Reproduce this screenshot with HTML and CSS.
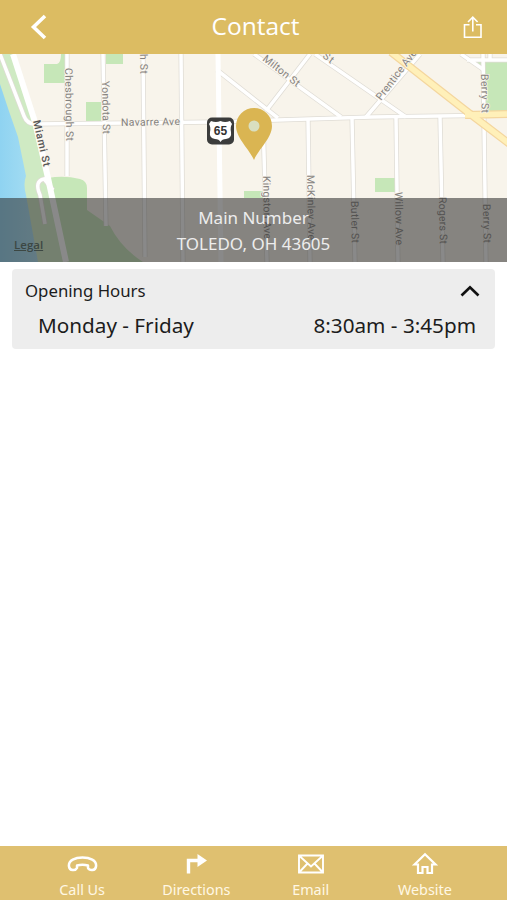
FILE: index.html
```html
<!DOCTYPE html>
<html lang="en">
<head>
    <meta charset="UTF-8">
    <meta name="viewport" content="width=device-width, initial-scale=1.0">
    <title>Contact</title>
    <link rel="stylesheet" href="styles.css">
</head>
<body>
    <header class="top-bar">
        <button class="icon-button" aria-label="Back">
            <svg width="18" height="28" viewBox="0 0 18 28"><path d="M15 3L3.500 14 15 25" fill="none" stroke="#fff" stroke-width="3.600"/></svg>
        </button>
        <h1>Contact</h1>
        <button class="icon-button" aria-label="Share">
            <svg width="20" height="24" viewBox="0 0 20 24"><path d="M6.500 9.800H1.500v12.500h16.500V9.800h-5M9.800 16.500V2.500M5 7L9.800 2.200l4.800 4.800" fill="none" stroke="#fff" stroke-width="1.600"/></svg>
        </button>
    </header>

    <section class="map">
        <svg class="map-canvas" width="507" height="208" viewBox="0 54 507 208">
            <defs>
                <linearGradient id="river" x1="0" x2="1">
                    <stop offset="0" stop-color="#8fd3f1"/>
                    <stop offset="1" stop-color="#a9dff3"/>
                </linearGradient>
            </defs>
            <rect y="54" width="507" height="208" fill="#f8f4eb"/>

            <!-- Parks and river -->
            <path d="M0 54H13L35 122L48 178L66 262H0Z" fill="#cfeac3"/>
            <path d="M48 178Q64 175 80 179Q87 181 87 188V210L110 226Q121 248 143 262H66Z" fill="#c6e7b8"/>
            <path d="M0 84Q9 112 18 137L26 176Q23 184 26 195L38 262H0Z" fill="url(#river)"/>
            <path d="M44 64H57Q61 63 61 54H67V83H44ZM106 54H123V64H106ZM86 102H101V121H86ZM375 178H395V192H375ZM244 191H265V198H244ZM485 62H507V111H485ZM472 62H484V70Z" fill="#c6e7b8"/>

            <!-- Streets, drawn as a grey casing with white on top -->
            <g fill="none" stroke="#dfdcd5" stroke-width="5">
                <use href="#streets"/>
            </g>
            <g fill="none" stroke="#fff" stroke-width="3.500">
                <g id="streets">
                    <path d="M0 54L24 116Q27 124 35 124L215 122L372 117L507 115"/>
                    <path d="M67 54V176M103 54L106 226M143 54L145 257M181 54L183 262"/>
                    <path d="M263 118L267 262M308 118L310 262M352 118L355 262M396 118L398 262M440 117L443 262M483 54L486 262"/>
                    <path d="M217 70L278 118M254 54L341 117M315 54L406 117M310 54L266 111M420 54L366 117M461 54L484 70M467 60H507M490 54V60"/>
                    <path d="M53 190L44 179Q34 181 40 195L45 224"/>
                </g>
                <path d="M13 54L35 122L48 178L66 262" stroke-width="6"/>
                <path d="M218 54L221 262" stroke-width="5"/>
            </g>
            <g fill="none" stroke="#f4d69e" stroke-width="8">
                <path d="M391 52L465 110L520 152M465 115L507 114"/>
                <path d="M391 52L465 110L520 152M465 115L507 114" stroke="#fff0b9" stroke-width="5.500"/>
            </g>

            <!-- Street names -->
            <g class="street-names">
                <text transform="translate(65 68) rotate(89)" textLength="73">Chesbrough St</text>
                <text transform="translate(102 81) rotate(89)" textLength="53">Yondota St</text>
                <text transform="translate(140 54) rotate(89)" textLength="20">h St</text>
                <text class="major" transform="translate(33 121) rotate(77)" textLength="47">Miami St</text>
                <text transform="translate(121 126) rotate(-1)" textLength="59">Navarre Ave</text>
                <text transform="translate(262 60) rotate(38)" textLength="44">Milton St</text>
                <text transform="translate(322 57) rotate(38)" textLength="11">St</text>
                <text transform="translate(381 101) rotate(-53)" textLength="60">Prentice Ave</text>
                <text transform="translate(481 74) rotate(89)" textLength="39">Berry St</text>
                <text transform="translate(263 176) rotate(89)" textLength="63">Kingston Ave</text>
                <text transform="translate(307 175) rotate(89)" textLength="65">McKinley Ave</text>
                <text transform="translate(351 201) rotate(89)" textLength="42">Butler St</text>
                <text transform="translate(395 192) rotate(89)" textLength="53">Willow Ave</text>
                <text transform="translate(439 197) rotate(89)" textLength="47">Rogers St</text>
                <text transform="translate(483 204) rotate(89)" textLength="39">Berry St</text>
            </g>

            <!-- Route shield -->
            <rect x="207" y="117.500" width="27" height="27" rx="5" fill="#3b3c3c"/>
            <path d="M211 121Q216 123 220.500 121Q225 123 230 121L232 124Q230 127 231 132Q232 138 226 139Q222 139 220.500 142Q219 139 215 139Q209 138 210 132Q211 127 209 124Z" fill="#fff"/>
            <text class="shield" x="220.500" y="135">65</text>

            <!-- Location pin -->
            <path d="M254 160C250 150 236 138 236 126A18 18 0 0 1 272 126C272 138 258 150 254 160Z" fill="#dab552"/>
            <circle cx="254" cy="126" r="5.500" fill="#d9dfc0"/>
        </svg>
        <div class="address">
            <a class="legal">Legal</a>
            <p>Main Number</p>
            <p>TOLEDO, OH 43605</p>
        </div>
    </section>

    <main>
        <section class="hours">
            <div class="hours-title">
                <h2>Opening Hours</h2>
                <svg width="20" height="14" viewBox="0 0 20 14"><path d="M1.500 11.500L10 3.300l8.500 8.200" fill="none" stroke="#111" stroke-width="2.700"/></svg>
            </div>
            <div class="hours-row">
                <span>Monday - Friday</span>
                <span>8:30am - 3:45pm</span>
            </div>
        </section>
    </main>

    <footer class="bottom-bar">
        <a class="action">
            <svg width="32" height="24" viewBox="0 0 32 24"><path d="M3 14.500C2 8 9.500 5.500 16.500 5.500S31 8 30 14.500C29.500 19 23.500 19 22 16V13.500Q16.500 12 11 13.500V16C9.500 19 3.500 19 3 14.500Z" fill="none" stroke="#fff" stroke-width="2.500" stroke-linejoin="round"/></svg>
            <span>Call Us</span>
        </a>
        <a class="action">
            <svg width="32" height="24" viewBox="0 0 32 24"><path d="M8.500 21.500V8.500H18.500" fill="none" stroke="#fff" stroke-width="3.400"/><path d="M17.500 2L27 8.500 17.500 15Z" fill="#fff"/></svg>
            <span>Directions</span>
        </a>
        <a class="action">
            <svg width="32" height="24" viewBox="0 0 32 24"><path d="M4 3.500H28V20.500H4ZM4.500 4L16 14.500 27.500 4M4.500 20L12.500 11.500M27.500 20L19.500 11.500" fill="none" stroke="#fff" stroke-width="1.900"/></svg>
            <span>Email</span>
        </a>
        <a class="action">
            <svg width="32" height="24" viewBox="0 0 32 24"><path d="M5.500 12.500L16 2.300 26.500 12.500H23V21H18.500V15H13.500V21H9V12.500Z" fill="none" stroke="#fff" stroke-width="2.200"/></svg>
            <span>Website</span>
        </a>
    </footer>
</body>
</html>
```
FILE: styles.css
```css
:root {
    --primary-color: #dcbc62;
    --footer-color: #dfc070;
    --card-color: #ededed;
    --dark-color: #1c1c1c;
}

* {
    margin: 0;
    padding: 0;
    box-sizing: border-box;
}

body {
    display: flex;
    flex-direction: column;
    height: 100vh;
    background-color: white;
    color: var(--dark-color);
    font-family: "Noto Sans", "Open Sans", sans-serif;
}

.top-bar {
    display: flex;
    justify-content: space-between;
    align-items: center;
    height: 54px;
    padding: 0 24px 0 30px;
    background-color: var(--primary-color);
    color: white;
}

.top-bar h1 {
    padding-bottom: 2px;
    font-family: "Open Sans", sans-serif;
    font-size: 24.5px;
    font-weight: 400;
    line-height: 52px;
}

.icon-button {
    display: flex;
    border: none;
    background: none;
}

.map {
    position: relative;
    height: 208px;
    overflow: hidden;
}

.map-canvas {
    display: block;
}

.street-names {
    font-family: Roboto, sans-serif;
    font-size: 10.5px;
    fill: #85827f;
    stroke: #f8f4eb;
    stroke-width: 1.5px;
    paint-order: stroke;
}

.street-names .major {
    font-weight: 500;
    fill: #555;
}

.shield {
    font-family: "Liberation Sans", sans-serif;
    font-size: 12px;
    font-weight: 700;
    text-anchor: middle;
    fill: #333;
}

/* Lies over the lower part of the map */
.address {
    position: absolute;
    left: 0;
    right: 0;
    bottom: 0;
    height: 64px;
    padding-top: 7px;
    background-color: rgba(45, 45, 45, 0.56);
    color: #ededed;
    font-size: 17px;
    line-height: 26px;
    text-align: center;
}

.legal {
    position: absolute;
    left: 14px;
    bottom: 9px;
    color: #3c4743;
    font-family: "Open Sans", sans-serif;
    font-size: 11.5px;
    font-weight: 600;
    line-height: 16px;
    text-decoration: underline;
}

main {
    flex: 1;
    padding: 7px 12px;
}

.hours {
    height: 80px;
    border-radius: 4px;
    background-color: var(--card-color);
}

.hours-title {
    display: flex;
    justify-content: space-between;
    align-items: center;
    height: 43px;
    padding: 0 15px 0 13px;
}

.hours-title h2 {
    font-size: 16.8px;
    font-weight: 400;
}

.hours-row {
    display: flex;
    justify-content: space-between;
    padding: 0 19px 0 26px;
    font-size: 20.7px;
    line-height: 27px;
}

.bottom-bar {
    display: flex;
    height: 54px;
    padding: 6px 25px 0;
    background-color: var(--footer-color);
}

.action {
    flex: 1;
    display: flex;
    flex-direction: column;
    align-items: center;
    color: #fff8e5;
    font-size: 14.4px;
    line-height: 20px;
}

.action span {
    margin-top: 4px;
}
```
